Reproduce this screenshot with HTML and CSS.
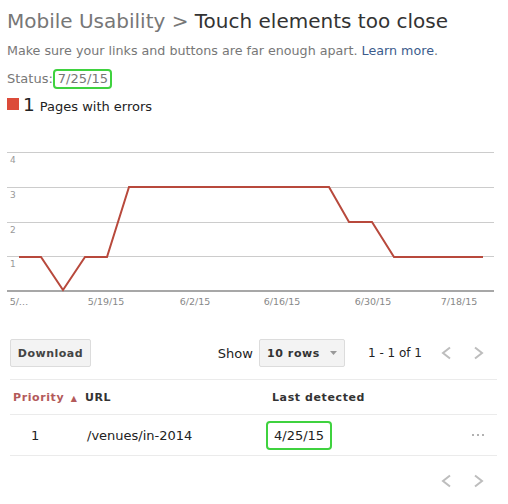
FILE: index.html
```html
<!DOCTYPE html>
<html>
<head>
<meta charset="utf-8">
<link rel="stylesheet" href="styles.css">
</head>
<body>
<div class="page">
  <h1 class="title"><span class="crumb">Mobile Usability &gt; </span><span class="current">Touch elements too close</span></h1>
  <p class="desc">Make sure your links and buttons are far enough apart. <a class="link" href="#">Learn more</a>.</p>
  <p class="status">Status:<span class="mark mark-status">7/25/15</span></p>
  <div class="legend">
    <span class="swatch"></span>
    <span class="count">1</span>
    <span class="legend-label">Pages with errors</span>
  </div>

  <svg class="chart" width="494" height="175" viewBox="7 140 494 175">
    <g class="grid">
      <line x1="7" y1="152.5" x2="494" y2="152.5"/>
      <line x1="7" y1="187.5" x2="494" y2="187.5"/>
      <line x1="7" y1="222.5" x2="494" y2="222.5"/>
      <line x1="7" y1="256.5" x2="494" y2="256.5"/>
    </g>
    <line class="axis" x1="7" y1="291" x2="494" y2="291"/>
    <g class="ylabels">
      <text x="10" y="163">4</text>
      <text x="10" y="198">3</text>
      <text x="10" y="233">2</text>
      <text x="10" y="267">1</text>
    </g>
    <polyline class="series" points="19,257 41,257 63,290 85,257 107,257 129,187 329,187 349,222 372,222 394,257 483,257"/>
    <g class="xlabels">
      <text x="19" y="305">5/…</text>
      <text x="106" y="305">5/19/15</text>
      <text x="195" y="305">6/2/15</text>
      <text x="282" y="305">6/16/15</text>
      <text x="373" y="305">6/30/15</text>
      <text x="459" y="305">7/18/15</text>
    </g>
  </svg>

  <div class="toolbar">
    <button class="btn">Download</button>
    <div class="toolbar-right">
      <span class="show">Show</span>
      <div class="select"><span class="select-text">10 rows</span>
        <svg class="caret" width="7" height="4" viewBox="0 0 7 4"><path d="M0 0 L7 0 L3.5 4 Z"/></svg>
      </div>
      <span class="range">1 - 1 of 1</span>
      <div class="pager">
        <span class="pg"><svg width="24" height="24" viewBox="0 0 24 24"><polyline points="16,6.5 9,12 16,17.5"/></svg></span>
        <span class="pg"><svg width="24" height="24" viewBox="0 0 24 24"><polyline points="8,6.5 15,12 8,17.5"/></svg></span>
      </div>
    </div>
  </div>

  <div class="table">
    <div class="thead">
      <div class="th th-priority">Priority <span class="sort">▲</span></div>
      <div class="th th-url">URL</div>
      <div class="th th-date">Last detected</div>
      <div class="th"></div>
    </div>
    <div class="trow">
      <div class="td td-priority">1</div>
      <div class="td td-url">/venues/in-2014</div>
      <div class="td td-date"><span class="mark mark-date">4/25/15</span></div>
      <div class="td td-more"><svg width="14" height="4" viewBox="0 0 14 4"><circle cx="2" cy="2" r="1"/><circle cx="7" cy="2" r="1"/><circle cx="12" cy="2" r="1"/></svg></div>
    </div>
  </div>

  <div class="pager pager-bottom">
    <span class="pg"><svg width="24" height="24" viewBox="0 0 24 24"><polyline points="16,6.5 9,12 16,17.5"/></svg></span>
    <span class="pg"><svg width="24" height="24" viewBox="0 0 24 24"><polyline points="8,6.5 15,12 8,17.5"/></svg></span>
  </div>
</div>
</body>
</html>
```
FILE: styles.css
```css
* { box-sizing: border-box; }
html, body { margin: 0; padding: 0; background: #fff; }
body { font-family: "DejaVu Sans", Verdana, sans-serif; color: #222; }
.page { padding: 0 7px; width: 508px; }

.title { margin: 9px 0 0; font-size: 20px; line-height: 24px; font-weight: normal; white-space: nowrap; }
.crumb { color: #777; }
.current { color: #333; }

.desc { margin: 9px 0 0; font-size: 12.7px; line-height: 18px; color: #777; }
.link { color: #3b5b8c; text-decoration: none; }

.status { margin: 9px 0 0; font-size: 13px; line-height: 20px; color: #777; }
.mark { display: inline-block; border: 2px solid #3fd23f; border-radius: 4px; }
.mark-status { line-height: 16px; padding: 0 2px 0 3px; color: #777; }

.legend { margin-top: 6px; height: 20px; display: flex; align-items: baseline; }
.swatch { align-self: flex-start; margin-top: 3px; width: 12px; height: 12px; background: #dc4b3a; }
.count { font-size: 18.5px; line-height: 20px; margin-left: 4px; color: #222; }
.legend-label { font-size: 13px; line-height: 20px; margin-left: 5px; color: #222; }

.chart { display: block; margin-top: 25px; overflow: visible; }
.grid line { stroke: #cccccc; stroke-width: 1; }
.axis { stroke: #8a8a8a; stroke-width: 1.5; }
.series { fill: none; stroke: #b8493c; stroke-width: 2; stroke-linejoin: miter; }
.ylabels text { font-family: "DejaVu Sans", sans-serif; font-size: 9px; fill: #999; }
.xlabels text { font-family: "DejaVu Sans", sans-serif; font-size: 9.5px; fill: #888; text-anchor: middle; }

.toolbar { margin: 24px 10px 0 3px; height: 28px; display: flex; align-items: center; justify-content: space-between; }
.btn { height: 28px; width: 81px; padding: 0; border: 1px solid #dcdcdc; border-radius: 2px; background: #f3f3f3; font-family: "DejaVu Sans", sans-serif; font-size: 11px; font-weight: bold; letter-spacing: 0.5px; color: #444; }
.toolbar-right { display: flex; align-items: center; }
.show { font-size: 13px; color: #222; }
.select { margin-left: 6px; width: 86px; height: 28px; border: 1px solid #dcdcdc; border-radius: 2px; background: #f3f3f3; display: flex; align-items: center; justify-content: space-between; padding: 0 7px 0 7px; }
.select-text { font-size: 11px; font-weight: bold; letter-spacing: 0.6px; color: #333; }
.caret { fill: #999; }
.range { margin-left: 23px; font-size: 12px; color: #222; }
.pager { display: flex; align-items: center; gap: 9px; }
.toolbar .pager { margin-left: 12px; }
.pg { display: block; width: 24px; height: 24px; }
.pg svg { display: block; }
.pg polyline { fill: none; stroke: #bdbdbd; stroke-width: 2; }

.table { margin: 12px 4px 0 3px; }
.thead, .trow { display: grid; grid-template-columns: 74px 188px 1fr 40px; align-items: center; border-bottom: 1px solid #ebebeb; }
.thead { border-top: 1px solid #ebebeb; height: 36px; }
.trow { height: 41px; }
.th { font-size: 11px; font-weight: bold; letter-spacing: 0.6px; color: #333; }
.th-priority { padding-left: 3px; color: #b35a5a; }
.sort { font-size: 8px; margin-left: 2px; }
.th-url { padding-left: 1px; }
.th-date { padding-left: 0; }
.td { font-size: 13px; color: #222; }
.td-priority { padding-left: 21px; }
.td-url { padding-left: 3px; }
.td-date { margin-left: -6px; }
.mark-date { line-height: 15px; padding: 5px 6px; color: #222; }
.td-more { display: flex; justify-content: flex-end; padding-right: 12px; }
.td-more circle { fill: #999; }

.pager-bottom { margin: 13px 10px 0 0; justify-content: flex-end; }
```
